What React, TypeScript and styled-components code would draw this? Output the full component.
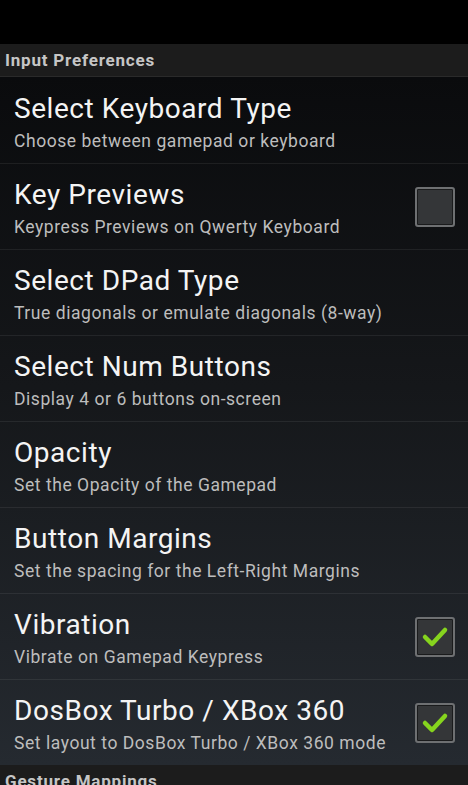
import React from "react";
import styled, { createGlobalStyle } from "styled-components";

const Global = createGlobalStyle`
  html, body { margin: 0; padding: 0; background: #000; }
  body { font-family: Roboto, "Noto Sans", sans-serif; }
  * { box-sizing: border-box; }
`;

const Screen = styled.div`
  width: 468px;
  height: 785px;
  overflow: hidden;
  display: flex;
  flex-direction: column;
  background: #000;
`;

const StatusBar = styled.div`
  height: 44px;
  flex: none;
  background: #000;
`;

const SectionHeader = styled.div`
  height: 33px;
  flex: none;
  display: flex;
  align-items: center;
  padding-left: 5px;
  background: #1c1c1c;
  color: #c6c6c6;
  font-size: 17px;
  letter-spacing: 0.8px;
  font-weight: 700;
  border-bottom: 1px solid #2a2a2a;
`;

const List = styled.div`
  flex: none;
  height: 688px;
  display: flex;
  flex-direction: column;
  background: linear-gradient(to bottom, #0a0b0d 0%, #15171a 45%, #252a30 100%);
`;

const Row = styled.div<{ $first?: boolean }>`
  height: 86px;
  flex: none;
  display: flex;
  align-items: center;
  padding: 0 13px 0 14px;
  border-top: 1px solid ${(p) => (p.$first ? "transparent" : "rgba(255,255,255,0.07)")};
`;

const Texts = styled.div`
  flex: 1;
  display: flex;
  flex-direction: column;
  gap: 5px;
  margin-top: 4px;
`;

const Title = styled.div`
  color: #f4f4f4;
  font-size: 28px;
  letter-spacing: 0.55px;
  line-height: 32px;
  font-weight: 400;
`;

const Subtitle = styled.div`
  color: #bdbdbd;
  font-size: 17.5px;
  letter-spacing: 0.55px;
  line-height: 22px;
`;

const Box = styled.div`
  width: 40px;
  height: 40px;
  flex: none;
  border: 2px solid #6e7072;
  border-radius: 3px;
  background: #343638;
  box-shadow: inset 0 0 0 1px #1a1b1c;
  display: flex;
  align-items: center;
  justify-content: center;
`;

const Check = () => (
  <svg width="28" height="24" viewBox="0 0 28 24">
    <polyline
      points="4,12 11,19 24,5"
      fill="none"
      stroke="#86d41e"
      strokeWidth="4.5"
      strokeLinecap="round"
      strokeLinejoin="round"
    />
  </svg>
);

type Item = { title: string; sub: string; check?: boolean };

const items: Item[] = [
  { title: "Select Keyboard Type", sub: "Choose between gamepad or keyboard" },
  { title: "Key Previews", sub: "Keypress Previews on Qwerty Keyboard", check: false },
  { title: "Select DPad Type", sub: "True diagonals or emulate diagonals (8-way)" },
  { title: "Select Num Buttons", sub: "Display 4 or 6 buttons on-screen" },
  { title: "Opacity", sub: "Set the Opacity of the Gamepad" },
  { title: "Button Margins", sub: "Set the spacing for the Left-Right Margins" },
  { title: "Vibration", sub: "Vibrate on Gamepad Keypress", check: true },
  { title: "DosBox Turbo / XBox 360", sub: "Set layout to DosBox Turbo / XBox 360 mode", check: true },
];

export default function App() {
  return (
    <Screen>
      <Global />
      <StatusBar />
      <SectionHeader>Input Preferences</SectionHeader>
      <List>
        {items.map((it, i) => (
          <Row key={it.title} $first={i === 0}>
            <Texts>
              <Title>{it.title}</Title>
              <Subtitle>{it.sub}</Subtitle>
            </Texts>
            {it.check !== undefined && <Box>{it.check && <Check />}</Box>}
          </Row>
        ))}
      </List>
      <SectionHeader>Gesture Mappings</SectionHeader>
    </Screen>
  );
}
